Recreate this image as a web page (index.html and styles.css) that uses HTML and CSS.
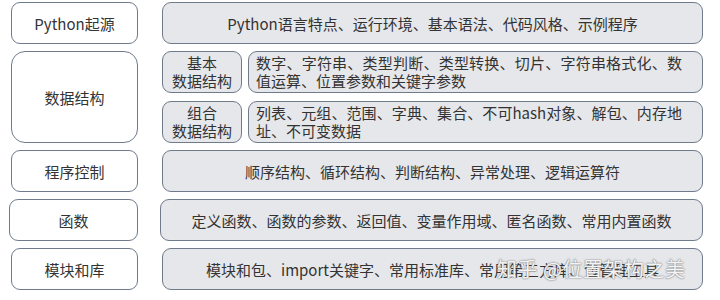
FILE: index.html
```html
<!DOCTYPE html>
<html>
<head>
<meta charset="utf-8">
<link rel="stylesheet" href="styles.css">
</head>
<body>
<div class="chart">
  <div class="label">Python起源</div>
  <div class="content">Python语言特点、运行环境、基本语法、代码风格、示例程序</div>

  <div class="label tall">数据结构</div>
  <div class="group">
    <div class="sub">
      <div class="sublabel">基本<br>数据结构</div>
      <div class="subcontent">数字、字符串、类型判断、类型转换、切片、字符串格式化、数值运算、位置参数和关键字参数</div>
    </div>
    <div class="sub">
      <div class="sublabel">组合<br>数据结构</div>
      <div class="subcontent">列表、元组、范围、字典、集合、不可hash对象、解包、内存地址、不可变数据</div>
    </div>
  </div>

  <div class="label">程序控制</div>
  <div class="content">顺序结构、循环结构、判断结构、异常处理、逻辑运算符</div>

  <div class="label shift">函数</div>
  <div class="content shift">定义函数、函数的参数、返回值、变量作用域、匿名函数、常用内置函数</div>

  <div class="label">模块和库</div>
  <div class="content last">模块和包、import关键字、常用标准库、常用第三方库、包管理工具<span class="watermark">知乎 @位置架构之美</span></div>
</div>
</body>
</html>
```

FILE: styles.css
```css
html, body {
  margin: 0;
  padding: 0;
  background: #ffffff;
}
body {
  width: 720px;
  height: 300px;
  overflow: hidden;
  font-family: "Noto Sans CJK SC", "Noto Sans", sans-serif;
  color: #333333;
}
.chart {
  display: grid;
  grid-template-columns: 127px 541px;
  column-gap: 24px;
  row-gap: 7px;
  padding: 2px 0 0 11px;
}
.label, .content, .sublabel, .subcontent {
  box-sizing: border-box;
  border: 1px solid #6f7a8b;
  border-radius: 9px;
  display: flex;
  align-items: center;
  justify-content: center;
  font-size: 15px;
  line-height: 17px;
}
.label {
  height: 42px;
  background: #ffffff;
}
.label.tall {
  height: 92px;
  border-radius: 14px;
}
.content {
  height: 42px;
  background: #e6e7ea;
  position: relative;
}
.shift {
  margin-left: -2px;
}
.group {
  display: flex;
  flex-direction: column;
  gap: 8px;
}
.sub {
  display: flex;
  gap: 6px;
}
.sublabel {
  width: 80px;
  height: 42px;
  background: #e6e7ea;
  text-align: center;
  line-height: 18px;
}
.subcontent {
  flex: 1;
  height: 42px;
  background: #e6e7ea;
  justify-content: flex-start;
  padding: 0 20px 0 7px;
  text-align: justify;
  text-align-last: left;
  line-height: 18px;
}
.watermark {
  position: absolute;
  left: 334px;
  top: 7px;
  white-space: nowrap;
  font-size: 20px;
  line-height: 26px;
  color: rgba(255, 255, 255, 0.92);
  text-shadow: 0 0 1px #8a8a8a, 0 0 1px #8a8a8a, 0 0 2px rgba(90, 90, 90, 0.5);
  letter-spacing: 0.5px;
  pointer-events: none;
}
```
